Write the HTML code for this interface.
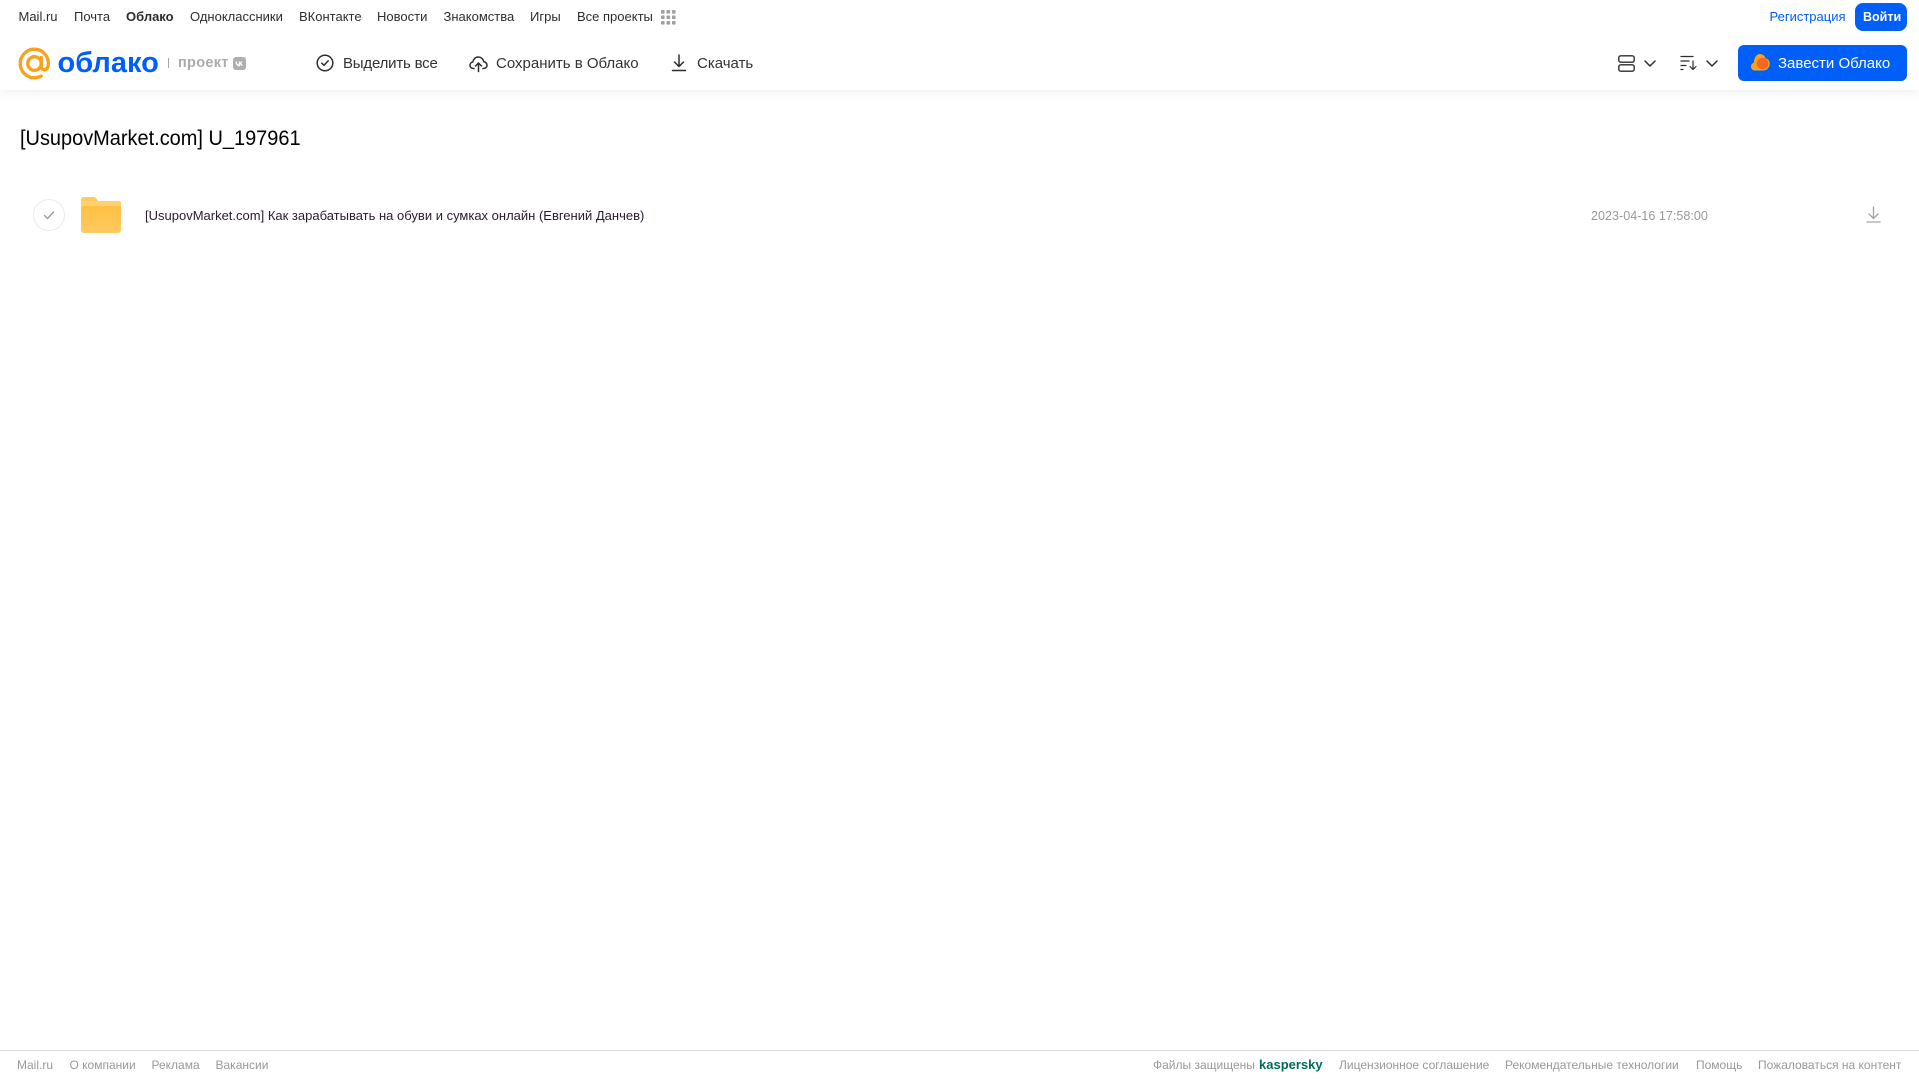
<!DOCTYPE html>
<html lang="ru">
<head>
<meta charset="utf-8">
<title>Облако</title>
<style>
html,body{margin:0;padding:0;background:#fff}
body{width:1919px;height:1079px;position:relative;overflow:hidden;font-family:"Liberation Sans",Arial,sans-serif}
.t{position:absolute;white-space:nowrap;line-height:20px}
.n{font-size:13px;top:7px;color:#2c2d2e}
.b{font-size:15px;top:53.500px;color:#333}
.f{font-size:12px;top:1055px;color:#999}
svg{position:absolute;overflow:visible}
#hdr{position:absolute;left:0;top:0;width:1919px;height:90px;background:#fff;box-shadow:0 2px 10px rgba(0,0,0,.07)}
</style>
</head>
<body>
<div id="hdr"></div>

<span class="t n" style="left:18.500px">Mail.ru</span>
<span class="t n" style="left:74px">Почта</span>
<span class="t n" style="left:126px;font-weight:bold">Облако</span>
<span class="t n" style="left:190px">Одноклассники</span>
<span class="t n" style="left:299px">ВКонтакте</span>
<span class="t n" style="left:377px">Новости</span>
<span class="t n" style="left:443.500px">Знакомства</span>
<span class="t n" style="left:530px">Игры</span>
<span class="t n" style="left:577px">Все проекты</span>
<svg style="left:661px;top:10px" width="15" height="15" fill="#a0a0a0">
<rect x="0" y="0" width="3.600" height="3.600" rx=".8"/><rect x="5.500" y="0" width="3.600" height="3.600" rx=".8"/><rect x="11" y="0" width="3.600" height="3.600" rx=".8"/>
<rect x="0" y="5.500" width="3.600" height="3.600" rx=".8"/><rect x="5.500" y="5.500" width="3.600" height="3.600" rx=".8"/><rect x="11" y="5.500" width="3.600" height="3.600" rx=".8"/>
<rect x="0" y="11" width="3.600" height="3.600" rx=".8"/><rect x="5.500" y="11" width="3.600" height="3.600" rx=".8"/><rect x="11" y="11" width="3.600" height="3.600" rx=".8"/>
</svg>

<span class="t n" style="left:1769.500px;color:#005ff9">Регистрация</span>
<div style="position:absolute;left:1855px;top:3px;width:52px;height:28px;border-radius:8px;background:#005ff9"></div>
<span class="t n" style="left:1863px;color:#fff;font-weight:bold;font-size:12.500px">Войти</span>

<!-- logo -->
<svg style="left:18px;top:47px" width="34" height="34" viewBox="0 0 34 34" fill="none">
<circle cx="16.500" cy="16.500" r="6.800" stroke="#f9a11b" stroke-width="3.300"/>
<path d="M23.300 10.500V19c0 2.600 1.400 3.800 3.200 3.800 2.300 0 3.900-2.600 3.900-6.300C30.400 8.600 24.200 2.200 16.500 2.200 8.600 2.200 2.200 8.600 2.200 16.500S8.600 30.800 16.500 30.800c2.500 0 4.700-.6 6.700-1.700" stroke="#f9a11b" stroke-width="3.300" stroke-linecap="round"/>
</svg>
<span class="t" style="left:57.500px;top:47px;font-size:29px;line-height:32px;font-weight:bold;color:#005ff9">облако</span>
<div style="position:absolute;left:168px;top:58px;width:1px;height:10px;background:#aaa"></div>
<span class="t" style="left:178px;top:53px;font-size:14.500px;font-weight:bold;color:#ababab;letter-spacing:.3px">проект</span>
<div style="position:absolute;left:233px;top:57px;width:13px;height:13px;border-radius:3px;background:#aeaeae"></div>
<svg style="left:233px;top:57px" width="13" height="13" fill="none" stroke="#fff" stroke-width="1.300"><path d="M3 4.500c.3 2.600 1.400 4 3.400 4.200V4.500M6.400 6.500c1.200-.2 2-1 2.500-2M6.400 6.500c1.300.2 2.200 1 2.800 2.200"/></svg>

<!-- toolbar -->
<svg style="left:316px;top:54px" width="18" height="18" fill="none" stroke="#2c2d2e" stroke-width="1.500" stroke-linecap="round" stroke-linejoin="round">
<circle cx="9" cy="9" r="7.800"/><path d="M5.800 9.200l2.200 2.200 4.200-4.600"/>
</svg>
<span class="t b" style="left:343px;letter-spacing:-.2px">Выделить все</span>
<svg style="left:469px;top:54px" width="19" height="19" fill="none" stroke="#2c2d2e" stroke-width="1.500" stroke-linecap="round" stroke-linejoin="round">
<path d="M5 14.500H4.200C2.400 14.500 1 13 1 11.200c0-1.600 1.200-3 2.800-3.200C4.300 5.200 6.500 3 9.300 3c2.700 0 5 2 5.400 4.700 1.900.1 3.300 1.700 3.300 3.500 0 1.800-1.400 3.300-3.200 3.300H14"/>
<path d="M9.500 17.500V9.500M6.500 12l3-3 3 3"/>
</svg>
<span class="t b" style="left:496px">Сохранить в Облако</span>
<svg style="left:671px;top:54px" width="16" height="18" fill="none" stroke="#2c2d2e" stroke-width="1.500" stroke-linecap="round" stroke-linejoin="round">
<path d="M8 1v11M3.500 8L8 12.500 12.500 8M1.500 16.500h13"/>
</svg>
<span class="t b" style="left:697px">Скачать</span>

<svg style="left:1618px;top:55px" width="17" height="17" fill="none" stroke="#2c2d2e" stroke-width="1.400">
<rect x=".8" y=".8" width="15.400" height="6.400" rx="2"/><rect x=".8" y="9.800" width="15.400" height="6.400" rx="2"/>
</svg>
<svg style="left:1644px;top:60px" width="12" height="7" fill="none" stroke="#2c2d2e" stroke-width="1.500" stroke-linecap="round" stroke-linejoin="round"><path d="M1 1l5 5 5-5"/></svg>
<svg style="left:1680px;top:55px" width="18" height="16" fill="none" stroke="#2c2d2e" stroke-width="1.200" stroke-linecap="round" stroke-linejoin="round">
<path d="M1 1.500h12M1 6h8M1 10.500h5M1 14.500h2M13 6v8.500M10 11.500l3 3 3-3"/>
</svg>
<svg style="left:1706px;top:60px" width="12" height="7" fill="none" stroke="#2c2d2e" stroke-width="1.500" stroke-linecap="round" stroke-linejoin="round"><path d="M1 1l5 5 5-5"/></svg>

<div style="position:absolute;left:1738px;top:45px;width:169px;height:36px;border-radius:6px;background:#005ff9"></div>
<svg style="left:1751px;top:54px" width="19" height="17">
<path d="M4 16.500C1.800 16.500 0 14.800 0 12.600c0-1.800 1.200-3.300 2.800-3.800C3 4 5.500 0 9 0c2.900 0 4.800 1.800 5.400 4.200 2.500.4 4.400 2.600 4.400 5.300 0 3.900-3 7-6.800 7z" fill="#f9a11b"/>
<circle cx="11.500" cy="9.500" r="5.800" fill="#f26a21"/>
</svg>
<span class="t" style="left:1778px;top:53.500px;font-size:15px;color:#fff">Завести Облако</span>

<!-- content -->
<span class="t" style="left:20px;top:126.500px;font-size:21px;line-height:24px;color:#000;transform:scaleX(.95);transform-origin:0 50%">[UsupovMarket.com] U_197961</span>

<svg style="left:32px;top:198px" width="34" height="34" fill="none">
<circle cx="17" cy="17" r="15.500" stroke="#ececec" stroke-width="1"/>
<path d="M12.500 17.500l3 3 6-6.500" stroke="#999" stroke-width="1.400" stroke-linecap="round" stroke-linejoin="round"/>
</svg>
<svg style="left:81px;top:197px" width="41" height="36">
<defs><linearGradient id="g" x1="0" y1="0" x2="0" y2="1"><stop offset="0" stop-color="#ffbe3d"/><stop offset="1" stop-color="#ffca60"/></linearGradient></defs>
<path d="M0 3a3 3 0 0 1 3-3h9c2.400 0 3.500 1 4.500 3.500L17 4h-17z" fill="#ffc95f"/>
<path d="M0 4h37.500a2.500 2.500 0 0 1 2.500 2.500V33a3 3 0 0 1-3 3H3a3 3 0 0 1-3-3z" fill="url(#g)"/>
<path d="M0 4h37.500a2.500 2.500 0 0 1 2.500 2.500V9H0z" fill="#ffcf70"/>
</svg>
<span class="t" style="left:145px;top:206px;font-size:13px;color:#2a1a2e">[UsupovMarket.com] Как зарабатывать на обуви и сумках онлайн (Евгений Данчев)</span>
<span class="t" style="left:1591px;top:206px;font-size:12.600px;color:#999">2023-04-16 17:58:00</span>
<svg style="left:1865.500px;top:206px" width="15" height="18" fill="none" stroke="#a3a3a3" stroke-width="1.300" stroke-linecap="round" stroke-linejoin="round">
<path d="M7.500 1v11M3 8l4.500 4.500L12 8M1 16h13"/>
</svg>

<!-- footer -->
<div style="position:absolute;left:0;top:1050px;width:1919px;height:1px;background:#d9d9d9"></div>
<span class="t f" style="left:17px">Mail.ru</span>
<span class="t f" style="left:69.500px">О компании</span>
<span class="t f" style="left:151.500px">Реклама</span>
<span class="t f" style="left:215.500px">Вакансии</span>
<span class="t f" style="left:1153px">Файлы защищены</span>
<span class="t" style="left:1259px;top:1055px;font-size:13px;font-weight:bold;color:#006d5c">kaspersky</span>
<span class="t f" style="left:1339px">Лицензионное соглашение</span>
<span class="t f" style="left:1505px">Рекомендательные технологии</span>
<span class="t f" style="left:1696px">Помощь</span>
<span class="t f" style="left:1758px">Пожаловаться на контент</span>
</body>
</html>
